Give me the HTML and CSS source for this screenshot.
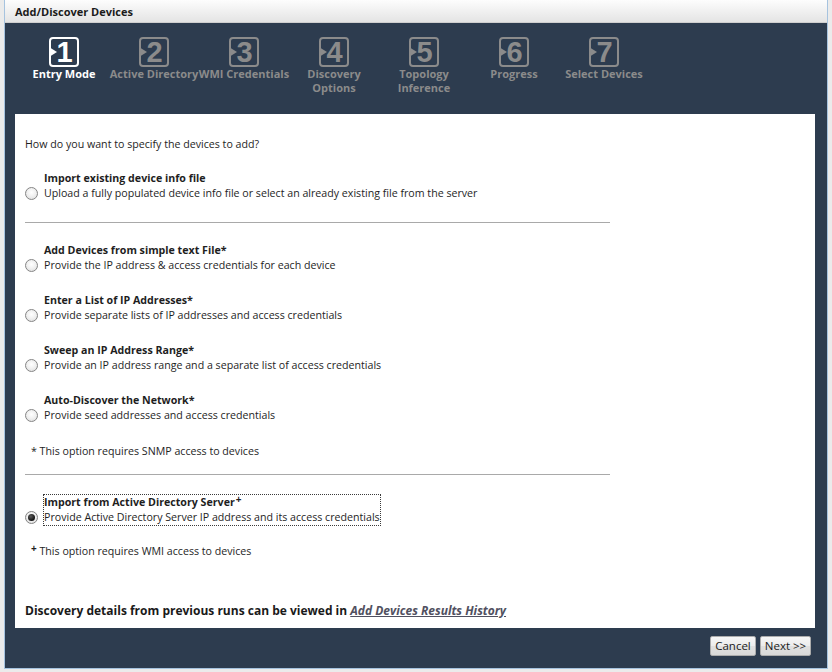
FILE: index.html
```html
<!DOCTYPE html>
<html>
<head>
<meta charset="utf-8">
<title>Add/Discover Devices</title>
<link rel="stylesheet" href="styles.css">
</head>
<body>
<div class="dialog">
  <div class="titlebar">Add/Discover Devices</div>
  <div class="body">
    <div class="steps">
      <div class="step active"><div class="badge"><span class="tri"></span><span class="num">1</span></div><div class="label">Entry Mode</div></div>
      <div class="step"><div class="badge"><span class="tri"></span><span class="num">2</span></div><div class="label">Active Directory</div></div>
      <div class="step"><div class="badge"><span class="tri"></span><span class="num">3</span></div><div class="label">WMI Credentials</div></div>
      <div class="step"><div class="badge"><span class="tri"></span><span class="num">4</span></div><div class="label">Discovery<br>Options</div></div>
      <div class="step"><div class="badge"><span class="tri"></span><span class="num">5</span></div><div class="label">Topology<br>Inference</div></div>
      <div class="step"><div class="badge"><span class="tri"></span><span class="num">6</span></div><div class="label">Progress</div></div>
      <div class="step"><div class="badge"><span class="tri"></span><span class="num">7</span></div><div class="label">Select Devices</div></div>
    </div>
    <div class="panel">
      <div class="question">How do you want to specify the devices to add?</div>
      <div class="opt first">
        <span class="radio"></span>
        <div class="text"><div class="t">Import existing device info file</div><div class="d">Upload a fully populated device info file or select an already existing file from the server</div></div>
      </div>
      <div class="sep"></div>
      <div class="opt after-sep">
        <span class="radio"></span>
        <div class="text"><div class="t">Add Devices from simple text File*</div><div class="d">Provide the IP address &amp; access credentials for each device</div></div>
      </div>
      <div class="opt">
        <span class="radio"></span>
        <div class="text"><div class="t">Enter a List of IP Addresses*</div><div class="d">Provide separate lists of IP addresses and access credentials</div></div>
      </div>
      <div class="opt">
        <span class="radio"></span>
        <div class="text"><div class="t">Sweep an IP Address Range*</div><div class="d">Provide an IP address range and a separate list of access credentials</div></div>
      </div>
      <div class="opt">
        <span class="radio"></span>
        <div class="text"><div class="t">Auto-Discover the Network*</div><div class="d">Provide seed addresses and access credentials</div></div>
      </div>
      <div class="note snmp">* This option requires SNMP access to devices</div>
      <div class="sep sep2"></div>
      <div class="opt after-sep">
        <span class="radio checked"></span>
        <div class="text focused"><div class="t">Import from Active Directory Server<sup class="plus">+</sup></div><div class="d">Provide Active Directory Server IP address and its access credentials</div></div>
      </div>
      <div class="note wmi"><sup class="plus">+</sup> This option requires WMI access to devices</div>
      <div class="history">Discovery details from previous runs can be viewed in <a class="link" href="#">Add Devices Results History</a></div>
    </div>
    <div class="buttons">
      <button class="btn cancel">Cancel</button>
      <button class="btn next">Next &gt;&gt;</button>
    </div>
  </div>
</div>
</body>
</html>
```

FILE: styles.css
```css
html, body {
  margin: 0;
  padding: 0;
}
body {
  background: #ebebeb;
  font-family: "Open Sans", "DejaVu Sans", sans-serif;
  width: 832px;
  height: 672px;
  overflow: hidden;
}
.dialog {
  margin-left: 4px;
  width: 822px;
  border: 1px solid #a6c3df;
  border-top: none;
}
.titlebar {
  height: 22px;
  line-height: 23px;
  padding-left: 10px;
  font-size: 11px;
  font-weight: bold;
  color: #1b1b1b;
  background: linear-gradient(#fdfdfd, #e4e4e4);
  border-bottom: 1px solid #cfcfcf;
}
.body {
  background: #2d3c4f;
  height: 645px;
}
.steps {
  display: flex;
  height: 91px;
  box-sizing: border-box;
  padding: 14px 0 0 14px;
}
.step {
  width: 90px;
  display: flex;
  flex-direction: column;
  align-items: center;
  color: #8b8b8b;
}
.step.active {
  color: #ffffff;
}
.badge {
  position: relative;
  width: 30px;
  height: 30px;
  box-sizing: border-box;
  border: 2px solid currentColor;
  border-radius: 4px;
  display: flex;
  align-items: center;
  justify-content: center;
}
.tri {
  position: absolute;
  left: -2px;
  top: 50%;
  margin-top: -5px;
  width: 0;
  height: 0;
  border-left: 8px solid currentColor;
  border-top: 5px solid transparent;
  border-bottom: 5px solid transparent;
}
.num {
  font-family: "Liberation Sans", Arial, sans-serif;
  font-weight: bold;
  font-size: 29px;
  line-height: 26px;
  margin-left: 1px;
}
.label {
  font-size: 11px;
  font-weight: bold;
  line-height: 14px;
  text-align: center;
  white-space: nowrap;
}
.panel {
  margin: 0 12px 0 10px;
  width: 800px;
  height: 514px;
  box-sizing: border-box;
  background: #ffffff;
  padding: 23px 10px 0 10px;
  font-size: 10.65px;
  line-height: 15px;
  color: #1e1e1e;
}
.question {
  height: 15px;
}
.opt {
  display: flex;
  align-items: flex-end;
  margin-top: 20px;
}
.opt.first {
  margin-top: 19px;
}
.opt.after-sep {
  margin-top: 20px;
}
.radio {
  flex: none;
  width: 13px;
  height: 13px;
  box-sizing: border-box;
  border: 1px solid #858585;
  border-radius: 50%;
  background: radial-gradient(circle at 50% 40%, #ffffff 0%, #f1f1f1 45%, #d9d9d9 100%);
  margin: 0 6px 1px 0;
  display: flex;
  align-items: center;
  justify-content: center;
}
.radio.checked::after {
  content: "";
  width: 7px;
  height: 7px;
  border-radius: 50%;
  background: radial-gradient(circle at 40% 35%, #5a5a5a, #111111 70%);
}
.text .t {
  font-weight: bold;
}
.text.focused {
  outline: 1px dotted #3a3a3a;
}
.plus {
  font-size: 10px;
  line-height: 0;
  vertical-align: 3px;
  font-weight: bold;
  margin-left: 1px;
}
.sep {
  width: 585px;
  height: 1px;
  background: #a9a9a9;
  margin-top: 21px;
}
.sep2 {
  margin-top: 15px;
}
.note {
  padding-left: 6px;
}
.note.snmp {
  margin-top: 21px;
}
.note.wmi {
  margin-top: 19px;
}
.note.wmi .plus {
  margin-left: 0;
}
.history {
  margin-top: 44px;
  font-size: 12px;
  line-height: 16px;
  font-weight: bold;
  color: #1a1a1a;
}
.link {
  color: #505060;
  font-style: italic;
  text-decoration: underline;
}
.buttons {
  display: flex;
  justify-content: flex-end;
  gap: 4px;
  margin-top: 8px;
  padding-right: 16px;
}
.btn {
  height: 20px;
  box-sizing: border-box;
  border: 1px solid #acacac;
  border-radius: 2px;
  background: linear-gradient(#f6f6f6 0%, #ececec 50%, #e0e0e0 51%, #d9d9d9 100%);
  font-family: "Open Sans", "DejaVu Sans", sans-serif;
  font-size: 11.5px;
  line-height: 16px;
  color: #1a1a1a;
  padding: 0;
}
.cancel {
  width: 46px;
}
.next {
  width: 51px;
}
```
